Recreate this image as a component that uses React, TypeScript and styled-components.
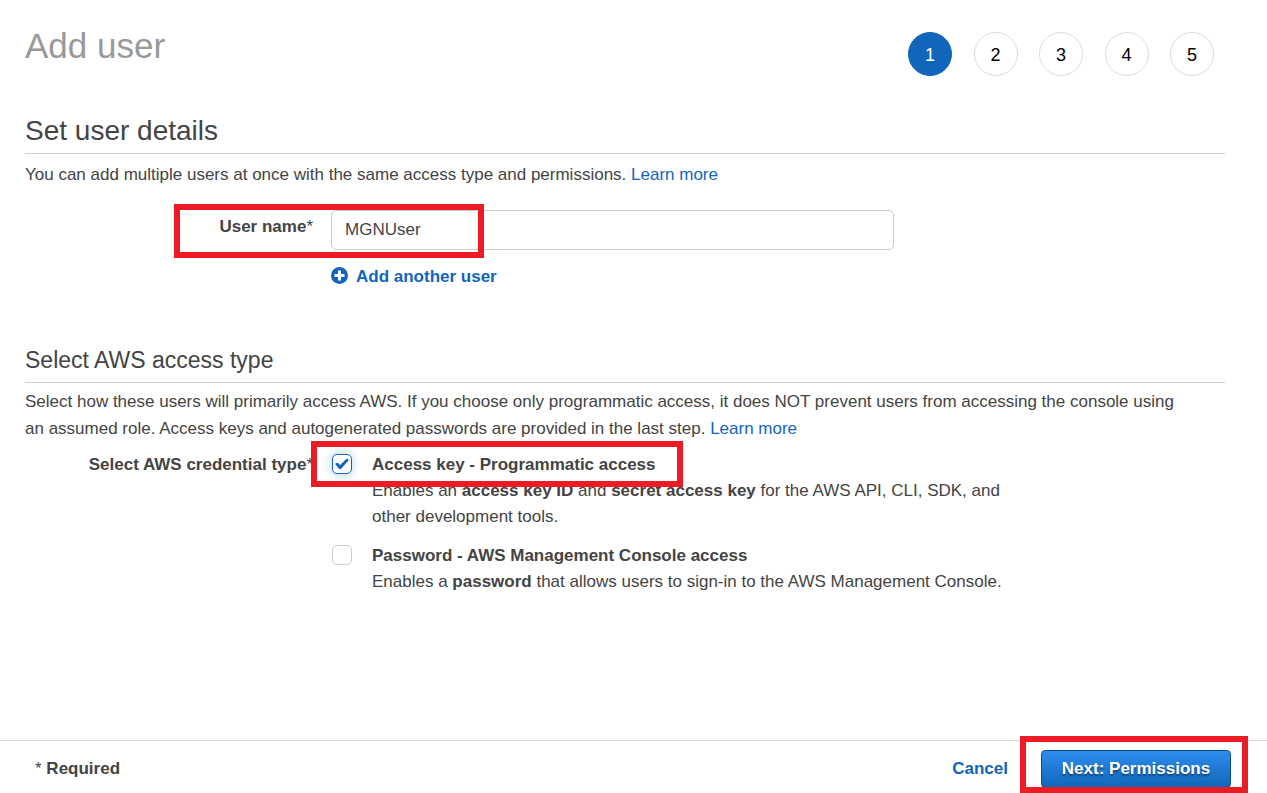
import React, { useState } from 'react';
import styled, { createGlobalStyle } from 'styled-components';

const blue = '#1166bb';
const red = '#ed1c24';

const GlobalStyle = createGlobalStyle`
  *, *::before, *::after { box-sizing: border-box; }
  body {
    margin: 0;
    background: #fff;
    color: #444;
    font-family: "Liberation Sans", Arial, sans-serif;
    font-size: 17px;
    line-height: 26px;
  }
`;

const Page = styled.div`
  display: flex;
  flex-direction: column;
  min-height: 100vh;
`;

const Main = styled.main`
  flex: 1;
  padding: 24px 42px 0 25px;
`;

const Header = styled.header`
  display: flex;
  justify-content: space-between;
  align-items: flex-start;
  height: 88px;
`;

const Title = styled.h1`
  margin: 0;
  color: #999;
  font-size: 35px;
  line-height: 44px;
  font-weight: 400;
`;

const Steps = styled.ol`
  display: flex;
  justify-content: space-between;
  width: 306px;
  margin: 8px 11px 0 0;
  padding: 0;
  list-style: none;
`;

const Step = styled.li<{ $current?: boolean }>`
  display: flex;
  align-items: center;
  justify-content: center;
  width: 44px;
  height: 44px;
  padding-top: 1px;
  border: 1px solid ${(p) => (p.$current ? blue : '#ddd')};
  border-radius: 50%;
  background: ${(p) => (p.$current ? blue : '#fff')};
  color: ${(p) => (p.$current ? '#fff' : '#000')};
  font-size: 18px;
`;

const Section = styled.section`
  margin-bottom: 51px;
`;

const Heading = styled.h2<{ $small?: boolean }>`
  margin: 0 0 ${(p) => (p.$small ? 5 : 7)}px;
  padding-bottom: 3px;
  border-bottom: 1px solid #ccc;
  font-size: ${(p) => (p.$small ? 23 : 28)}px;
  line-height: 38px;
  font-weight: 400;
`;

const Intro = styled.p`
  margin: 0;
  padding-right: 40px;
  line-height: 27px;
`;

const Link = styled.a`
  color: ${blue};
  text-decoration: none;
`;

const FormRow = styled.div<{ $top?: number }>`
  display: grid;
  grid-template-columns: 24% 1fr;
  column-gap: 18px;
  margin-top: ${(p) => p.$top ?? 0}px;
  position: relative;
`;

const RowLabel = styled.label`
  padding-top: 4px;
  text-align: right;
  font-weight: 700;
`;

const GroupLabel = styled.div`
  text-align: right;
  font-weight: 700;
  white-space: nowrap;
`;

const Star = styled.span`
  font-weight: 400;
`;

const TextInput = styled.input`
  display: block;
  width: 63%;
  height: 40px;
  padding: 0 13px;
  border: 1px solid #ccc;
  border-radius: 5px;
  background: #fff;
  color: #444;
  font: inherit;
  outline: none;
`;

const AddButton = styled.button`
  display: flex;
  align-items: center;
  gap: 8px;
  margin-top: 14px;
  padding: 0;
  border: 0;
  background: none;
  color: ${blue};
  font: inherit;
  font-weight: 700;
  cursor: pointer;

  svg {
    margin-bottom: 3px;
  }
`;

const Options = styled.div`
  display: flex;
  flex-direction: column;
  gap: 13px;
  max-width: 700px;
`;

const Option = styled.div`
  display: grid;
  grid-template-columns: 22px 1fr;
  column-gap: 19px;
`;

const CheckBox = styled.span`
  display: grid;
  place-items: center;
  height: 24px;
`;

const CheckInput = styled.input`
  grid-area: 1 / 1;
  appearance: none;
  width: 20px;
  height: 20px;
  margin: 0;
  border: 1px solid #ccc;
  border-radius: 5px;
  background: #fff;

  &:checked {
    border-color: ${blue};
    box-shadow: 0 0 10px #a9cff6;
  }
`;

const Tick = styled.svg`
  grid-area: 1 / 1;
  z-index: 1;
  pointer-events: none;
`;

const OptionLabel = styled.label`
  font-weight: 700;
`;

const OptionText = styled.p`
  margin: 0;
`;

const Highlight = styled.span<{ $box: [number, number, number, number] }>`
  position: absolute;
  z-index: 2;
  top: ${(p) => p.$box[0]}px;
  left: ${(p) => p.$box[1]}px;
  width: ${(p) => p.$box[2]}px;
  height: ${(p) => p.$box[3]}px;
  border: 6px solid ${red};
  pointer-events: none;
`;

const Footer = styled.footer`
  display: flex;
  align-items: center;
  height: 53px;
  padding: 4px 36px 0 35px;
  border-top: 1px solid #d5d5d5;
  font-weight: 700;
`;

const Required = styled.span`
  margin-right: auto;
`;

const CancelButton = styled.button`
  margin-right: 33px;
  padding: 0;
  border: 0;
  background: none;
  color: ${blue};
  font: inherit;
  cursor: pointer;
`;

const NextWrap = styled.div`
  position: relative;
`;

const NextButton = styled.button`
  display: block;
  width: 190px;
  height: 38px;
  padding: 0;
  border: 1px solid #0f4c8a;
  border-radius: 4px;
  background: linear-gradient(#2e8ded, #1166bb);
  color: #fff;
  font: inherit;
  text-shadow: 0 2px 2px rgba(0, 0, 0, 0.45);
  white-space: nowrap;
  cursor: pointer;
`;

interface CredentialProps {
  id: string;
  title: string;
  initial?: boolean;
  children: React.ReactNode;
}

function Credential({ id, title, initial = false, children }: CredentialProps) {
  const [checked, setChecked] = useState(initial);
  return (
    <Option>
      <CheckBox>
        <CheckInput id={id} type="checkbox" checked={checked} onChange={() => setChecked(!checked)} />
        {checked && (
          <Tick width="14" height="12" viewBox="0 0 14 12" aria-hidden="true">
            <path d="M0.4 6.2Q0.2 5 1.6 4.9L3 5 5.2 6.9 11.2 0.9Q12.6 0.2 13.6 1.5L13.4 2.4 6.2 10.8Q5 11.6 4 10.8Z" fill={blue} />
          </Tick>
        )}
      </CheckBox>
      <div>
        <OptionLabel htmlFor={id}>{title}</OptionLabel>
        <OptionText>{children}</OptionText>
      </div>
    </Option>
  );
}

export default function App() {
  const [name, setName] = useState('MGNUser');
  return (
    <Page>
      <GlobalStyle />
      <Main>
        <Header>
          <Title>Add user</Title>
          <Steps>
            {[1, 2, 3, 4, 5].map((n) => (
              <Step key={n} $current={n === 1}>{n}</Step>
            ))}
          </Steps>
        </Header>

        <Section>
          <Heading>Set user details</Heading>
          <Intro>
            You can add multiple users at once with the same access type and permissions.{' '}
            <Link href="#users">Learn more</Link>
          </Intro>
          <FormRow $top={22}>
            <RowLabel htmlFor="user-name">User name<Star>*</Star></RowLabel>
            <div>
              <TextInput id="user-name" value={name} onChange={(e) => setName(e.target.value)} />
              <AddButton type="button">
                <svg width="17" height="17" viewBox="0 0 17 17" aria-hidden="true">
                  <circle cx="8.5" cy="8.5" r="8.5" fill={blue} />
                  <path d="M8.5 3.5v10M3.5 8.5h10" stroke="#fff" strokeWidth="3" />
                </svg>
                Add another user
              </AddButton>
            </div>
            <Highlight $box={[-6, 149, 310, 54]} />
          </FormRow>
        </Section>

        <Section>
          <Heading $small>Select AWS access type</Heading>
          <Intro>
            Select how these users will primarily access AWS. If you choose only programmatic access, it does NOT
            prevent users from accessing the console using an assumed role. Access keys and autogenerated passwords
            are provided in the last step. <Link href="#access">Learn more</Link>
          </Intro>
          <FormRow $top={10} role="group" aria-labelledby="credential-type">
            <GroupLabel id="credential-type">Select AWS credential type<Star>*</Star></GroupLabel>
            <Options>
              <Credential id="access-key" title="Access key - Programmatic access" initial>
                Enables an <b>access key ID</b> and <b>secret access key</b> for the AWS API, CLI, SDK, and other
                development tools.
              </Credential>
              <Credential id="password" title="Password - AWS Management Console access">
                Enables a <b>password</b> that allows users to sign-in to the AWS Management Console.
              </Credential>
            </Options>
            <Highlight $box={[-11, 286, 372, 46]} />
          </FormRow>
        </Section>
      </Main>

      <Footer>
        <Required><Star>*</Star> Required</Required>
        <CancelButton type="button">Cancel</CancelButton>
        <NextWrap>
          <NextButton type="button">Next: Permissions</NextButton>
          <Highlight $box={[-14, -21, 228, 57]} />
        </NextWrap>
      </Footer>
    </Page>
  );
}
